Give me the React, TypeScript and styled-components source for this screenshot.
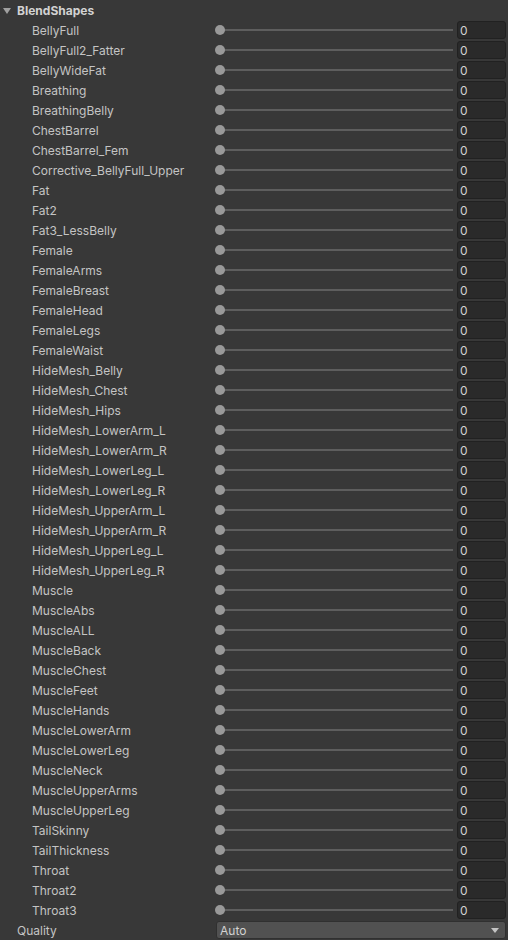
import styled, { createGlobalStyle } from "styled-components";

const shapes = [
	"BellyFull",
	"BellyFull2_Fatter",
	"BellyWideFat",
	"Breathing",
	"BreathingBelly",
	"ChestBarrel",
	"ChestBarrel_Fem",
	"Corrective_BellyFull_Upper",
	"Fat",
	"Fat2",
	"Fat3_LessBelly",
	"Female",
	"FemaleArms",
	"FemaleBreast",
	"FemaleHead",
	"FemaleLegs",
	"FemaleWaist",
	"HideMesh_Belly",
	"HideMesh_Chest",
	"HideMesh_Hips",
	"HideMesh_LowerArm_L",
	"HideMesh_LowerArm_R",
	"HideMesh_LowerLeg_L",
	"HideMesh_LowerLeg_R",
	"HideMesh_UpperArm_L",
	"HideMesh_UpperArm_R",
	"HideMesh_UpperLeg_L",
	"HideMesh_UpperLeg_R",
	"Muscle",
	"MuscleAbs",
	"MuscleALL",
	"MuscleBack",
	"MuscleChest",
	"MuscleFeet",
	"MuscleHands",
	"MuscleLowerArm",
	"MuscleLowerLeg",
	"MuscleNeck",
	"MuscleUpperArms",
	"MuscleUpperLeg",
	"TailSkinny",
	"TailThickness",
	"Throat",
	"Throat2",
	"Throat3",
];

const GlobalStyle = createGlobalStyle`
	html, body {
		margin: 0;
		padding: 0;
		background: #383838;
	}
	body {
		font-family: Inter, "Noto Sans", sans-serif;
		font-size: 12px;
		color: #c4c4c4;
	}
`;

const Inspector = styled.div`
	width: 508px;
	height: 940px;
	background: #383838;
	overflow: hidden;
`;

const Foldout = styled.div`
	height: 20px;
	display: flex;
	align-items: center;
	padding-left: 3px;
	gap: 6px;
	font-weight: 700;
	color: #d2d2d2;
`;

const Caret = styled.span`
	width: 0;
	height: 0;
	border-left: 4px solid transparent;
	border-right: 4px solid transparent;
	border-top: 6px solid #a0a0a0;
	margin-top: 1px;
`;

const Row = styled.div<{ $indent: number }>`
	height: 20px;
	display: grid;
	grid-template-columns: ${(p) => 214 - p.$indent}px 1fr 49px;
	column-gap: 4px;
	align-items: center;
	padding-left: ${(p) => p.$indent}px;
	padding-right: 2px;
`;

const Label = styled.span`
	white-space: nowrap;
	overflow: hidden;
`;

const Slider = styled.div`
	position: relative;
	height: 20px;
	display: flex;
	align-items: center;
	margin-left: -4px;

	&::before {
		content: "";
		position: absolute;
		left: 4px;
		right: 0;
		top: 9px;
		height: 2px;
		background: #5e5e5e;
	}
`;

const Thumb = styled.span`
	position: relative;
	width: 10px;
	height: 10px;
	border-radius: 50%;
	background: #999999;
	margin-left: 1px;
`;

const Field = styled.div`
	height: 16px;
	box-sizing: border-box;
	height: 18px;
	background: #2a2a2a;
	border: 1px solid #212121;
	border-radius: 3px;
	padding-left: 2px;
	display: flex;
	align-items: center;
	color: #d2d2d2;
`;

const Dropdown = styled.div`
	grid-column: 2 / 4;
	height: 18px;
	box-sizing: border-box;
	background: #515151;
	border: 1px solid #303030;
	border-radius: 3px;
	display: flex;
	align-items: center;
	justify-content: space-between;
	padding: 0 6px 0 3px;
	color: #d2d2d2;
	margin-left: -2px;
`;

const DropArrow = styled.span`
	width: 0;
	height: 0;
	border-left: 4px solid transparent;
	border-right: 4px solid transparent;
	border-top: 5px solid #c4c4c4;
`;

const App = () => {
	return (
		<Inspector>
			<GlobalStyle />
			<Foldout>
				<Caret />
				BlendShapes
			</Foldout>
			{shapes.map((name) => (
				<Row key={name} $indent={32}>
					<Label>{name}</Label>
					<Slider>
						<Thumb />
					</Slider>
					<Field>0</Field>
				</Row>
			))}
			<Row $indent={17}>
				<Label>Quality</Label>
				<Dropdown>
					Auto
					<DropArrow />
				</Dropdown>
			</Row>
		</Inspector>
	);
};

export default App;
